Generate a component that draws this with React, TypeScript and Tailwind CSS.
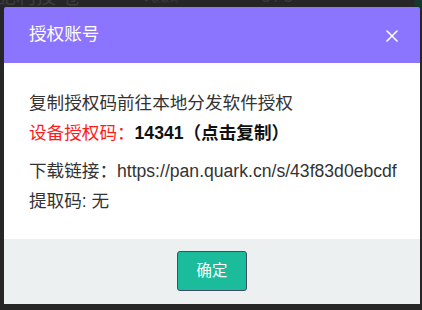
import React from 'react';

const font = { fontFamily: '"Liberation Sans", "Noto Sans CJK SC", sans-serif' };

export default function App() {
  return (
    <div className="relative w-[422px] h-[310px] overflow-hidden bg-[#262626]" style={font}>
      {/* dimmed page behind the dialog */}
      <div className="flex items-start h-[7px] overflow-visible text-[#3d3d3d]">
        <span className="ml-[-4px] mt-[-13px] text-[20px] leading-[20px]">記利技 卷</span>
        <span className="ml-[62px] mt-[-5px] text-[9px] leading-[9px]">● 获取码</span>
        <span className="ml-[83px] mt-[-11px] text-[16px] leading-[16px]">5 / 5</span>
        <span className="ml-auto mr-[-6px] mt-[-4px] w-[14px] h-[14px] rounded-full bg-[#14382c]"></span>
      </div>

      {/* dialog */}
      <div className="absolute left-[4px] top-[7px] w-[416px] rounded-t-[2px] overflow-hidden">
        <div className="flex items-center justify-between h-[56px] bg-[#8b74fe] pl-[25px] pr-[22px]">
          <span className="text-[17.6px] text-white leading-none">授权账号</span>
          <svg width="12" height="12" viewBox="0 0 12 12" className="mt-[1px]">
            <path d="M1 1L11 11M11 1L1 11" stroke="white" strokeWidth="1.6" strokeLinecap="round" />
          </svg>
        </div>

        <div className="bg-white pl-[25px] pt-[25px] pb-[23px] text-[17.6px] leading-[30px] text-[#333]">
          <div>复制授权码前往本地分发软件授权</div>
          <div>
            <span className="text-[#ff1a1a]">设备授权码：</span>
            <span className="font-bold text-[#111]">14341（点击复制）</span>
          </div>
          <div className="mt-[8px] whitespace-nowrap">下载链接：https://pan.quark.cn/s/43f83d0ebcdf</div>
          <div>提取码: 无</div>
        </div>

        <div className="flex justify-center items-start h-[65px] bg-[#ecf0f1] pt-[12px]">
          <button className="w-[70px] h-[40px] rounded-[3px] border border-[#3f4d62] bg-[#1abc9c] text-white text-[15.4px]">
            确定
          </button>
        </div>
      </div>
    </div>
  );
}
